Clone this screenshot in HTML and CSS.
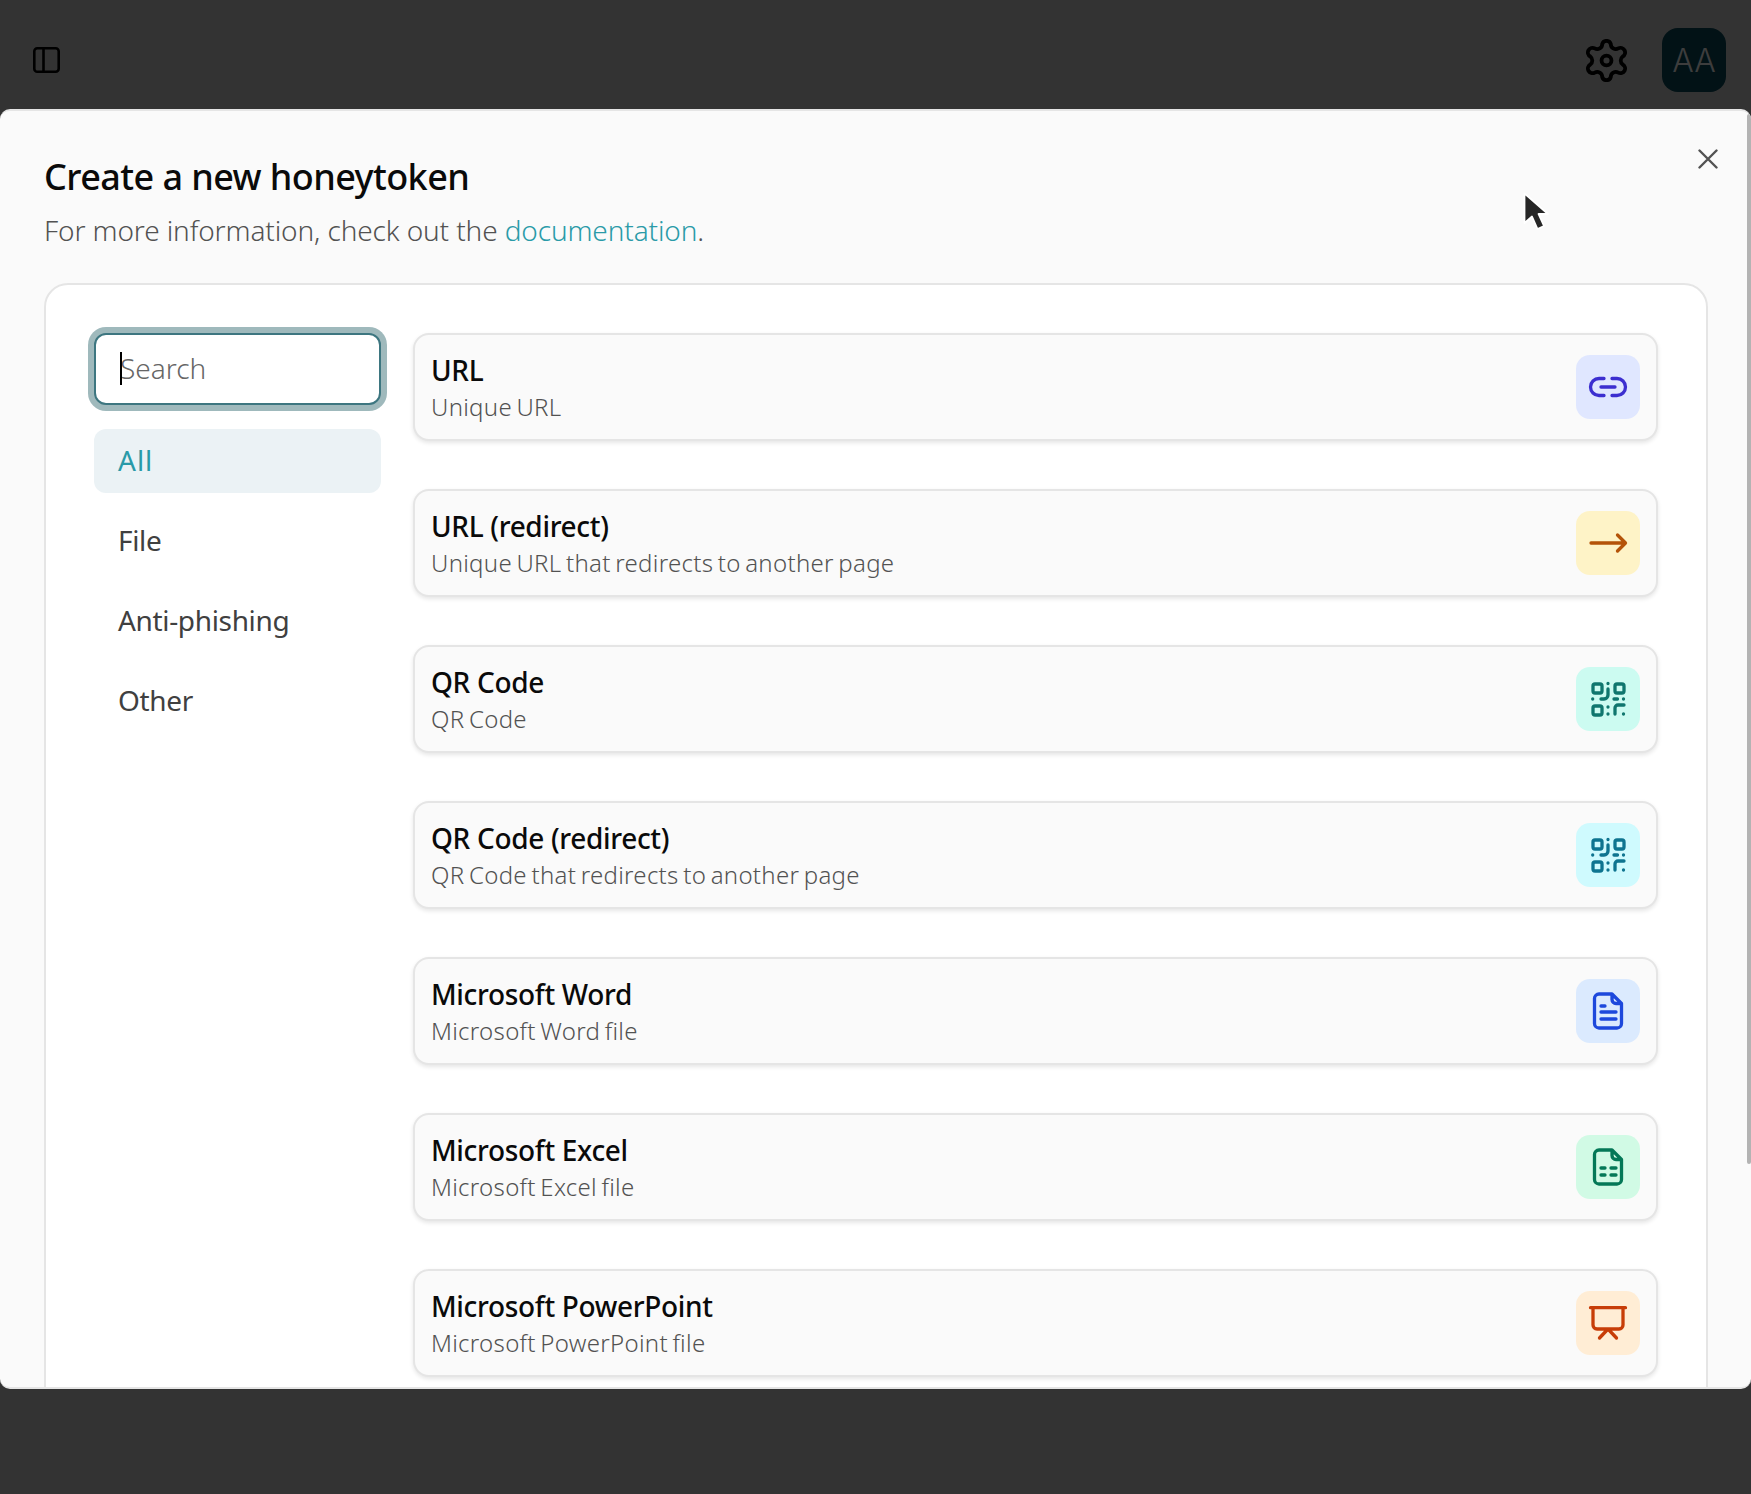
FILE: index.html
```html
<!DOCTYPE html>
<html lang="en">
<head>
<meta charset="UTF-8">
<title>Create a new honeytoken</title>
<meta name="viewport" content="width=device-width, initial-scale=1.0">
<link rel="stylesheet" href="styles.css">
</head>
<body>

<header class="topbar">
  <svg class="sidebar-icon" viewBox="0 0 27 26" fill="none" stroke="#000" stroke-width="2.6">
    <rect x="1.3" y="1.3" width="24.4" height="23.4" rx="3"/>
    <path d="M10.5 1.3V24.7"/>
  </svg>
  <div class="topbar-right">
    <svg class="gear-icon" viewBox="-13 -13 26 26" fill="none" stroke="#000" stroke-width="2.3" stroke-linejoin="round">
      <path d="M-2.6 -9.9A2.7 2.7 0 0 1 2.6 -9.9A3 3 0 0 0 7.1 -7.3A2.7 2.7 0 0 1 9.8 -2.4A3 3 0 0 0 9.8 2.4A2.7 2.7 0 0 1 7.1 7.3A3 3 0 0 0 2.6 9.9A2.7 2.7 0 0 1 -2.6 9.9A3 3 0 0 0 -7.1 7.3A2.7 2.7 0 0 1 -9.8 2.4A3 3 0 0 0 -9.8 -2.4A2.7 2.7 0 0 1 -7.1 -7.3A3 3 0 0 0 -2.6 -9.9Z"/>
      <circle cx="0" cy="0" r="3"/>
    </svg>
    <div class="avatar">AA</div>
  </div>
</header>

<section class="modal">
  <svg class="close-icon" viewBox="0 0 20 20" fill="none" stroke="#525252" stroke-width="2.4" stroke-linecap="round">
    <path d="M1.5 1.5L18.5 18.5M18.5 1.5L1.5 18.5"/>
  </svg>
  <div class="scroll-thumb"></div>

  <h1 class="modal-title">Create a new honeytoken</h1>
  <p class="modal-sub">For more information, check out the <a class="doc-link">documentation</a>.</p>

  <div class="panel">
    <aside class="filters">
      <div class="search-box"><span class="caret"></span>Search</div>
      <div class="filter filter-active">All</div>
      <div class="filter">File</div>
      <div class="filter">Anti-phishing</div>
      <div class="filter">Other</div>
    </aside>

    <div class="token-list">
      <div class="token">
        <div class="token-text">
          <div class="token-name">URL</div>
          <div class="token-desc">Unique URL</div>
        </div>
        <div class="tile tile-indigo">
          <svg class="tile-icon" viewBox="0 0 40 40"><path d="M16 11.500H11a8.500 8.500 0 0 0 0 17H16M24 11.500H29a8.500 8.500 0 0 1 0 17H24M13 20H27"/></svg>
        </div>
      </div>

      <div class="token">
        <div class="token-text">
          <div class="token-name">URL (redirect)</div>
          <div class="token-desc">Unique URL that redirects to another page</div>
        </div>
        <div class="tile tile-amber">
          <svg class="tile-icon" viewBox="0 0 40 40"><path d="M3 20H37M29.500 12L37.500 20L29.500 28"/></svg>
        </div>
      </div>

      <div class="token">
        <div class="token-text">
          <div class="token-name">QR Code</div>
          <div class="token-desc">QR Code</div>
        </div>
        <div class="tile tile-teal">
          <svg class="tile-icon" viewBox="0 0 40 40"><rect x="5" y="5" width="9" height="9" rx="2"/><rect x="27" y="5" width="9" height="9" rx="2"/><rect x="5" y="27" width="9" height="9" rx="2"/><path d="M20 4.500V4.600M20 10V16a4 4 0 0 1-4 4H13M4.700 20V20.100M26 20H29.500M35.500 20V20.100M20 28V28.100M20 35V35.100M27 35V29a3 3 0 0 1 3-3H36M35.500 35V35.100"/></svg>
        </div>
      </div>

      <div class="token">
        <div class="token-text">
          <div class="token-name">QR Code (redirect)</div>
          <div class="token-desc">QR Code that redirects to another page</div>
        </div>
        <div class="tile tile-cyan">
          <svg class="tile-icon" viewBox="0 0 40 40"><rect x="5" y="5" width="9" height="9" rx="2"/><rect x="27" y="5" width="9" height="9" rx="2"/><rect x="5" y="27" width="9" height="9" rx="2"/><path d="M20 4.500V4.600M20 10V16a4 4 0 0 1-4 4H13M4.700 20V20.100M26 20H29.500M35.500 20V20.100M20 28V28.100M20 35V35.100M27 35V29a3 3 0 0 1 3-3H36M35.500 35V35.100"/></svg>
        </div>
      </div>

      <div class="token">
        <div class="token-text">
          <div class="token-name">Microsoft Word</div>
          <div class="token-desc">Microsoft Word file</div>
        </div>
        <div class="tile tile-blue">
          <svg class="tile-icon" viewBox="0 0 40 40"><path d="M24 3H11a4.500 4.500 0 0 0-4.500 4.500V32.500A4.500 4.500 0 0 0 11 37H29a4.500 4.500 0 0 0 4.500-4.500V12.500ZM24 3V8.500a4 4 0 0 0 4 4H33.500M13 15H17M13 21H28M13 28H28"/></svg>
        </div>
      </div>

      <div class="token">
        <div class="token-text">
          <div class="token-name">Microsoft Excel</div>
          <div class="token-desc">Microsoft Excel file</div>
        </div>
        <div class="tile tile-green">
          <svg class="tile-icon" viewBox="0 0 40 40"><path d="M24 3H11a4.500 4.500 0 0 0-4.500 4.500V32.500A4.500 4.500 0 0 0 11 37H29a4.500 4.500 0 0 0 4.500-4.500V12.500ZM24 3V8.500a4 4 0 0 0 4 4H33.500M13 21H17M23 21H28M13 28H17M23 28H28"/></svg>
        </div>
      </div>

      <div class="token">
        <div class="token-text">
          <div class="token-name">Microsoft PowerPoint</div>
          <div class="token-desc">Microsoft PowerPoint file</div>
        </div>
        <div class="tile tile-orange">
          <svg class="tile-icon" viewBox="0 0 40 40"><path d="M2.500 4.700H37.500M5 4.700V22a4 4 0 0 0 4 4H31a4 4 0 0 0 4-4V4.700M20 26L11.500 35M20 26L28.500 35"/></svg>
        </div>
      </div>
    </div>
  </div>
</section>

<svg class="pointer" viewBox="0 0 26 40">
  <path d="M1.500 1.500V31L9 24.500L14.500 37L21 34L15.500 22H25Z" fill="#262626" stroke="#fff" stroke-width="1.800" stroke-linejoin="round"/>
</svg>

</body>
</html>
```

FILE: styles.css
```css
* {
  box-sizing: border-box;
}

html, body {
  margin: 0;
  height: 100%;
  overflow: hidden;
}

body {
  background-color: #333333;
  font-family: "Noto Sans", Arial, sans-serif;
  color: #0a0a0a;
}

/* top bar, dimmed by the modal backdrop */
.topbar {
  height: 109px;
  display: flex;
  align-items: center;
  justify-content: space-between;
  padding: 19px 25px 8px 33px;
}

.sidebar-icon {
  width: 27px;
  height: 26px;
}

.topbar-right {
  display: flex;
  align-items: center;
  gap: 34px;
}

.gear-icon {
  width: 43px;
  height: 43px;
}

.avatar {
  width: 64px;
  height: 64px;
  border-radius: 16px;
  background-color: #021216;
  color: #3d3d3d;
  display: flex;
  align-items: center;
  justify-content: center;
  font-size: 32px;
  font-family: "Inter", sans-serif;
  font-weight: 300;
}

.modal {
  position: relative;
  height: 1280px;
  background-color: #fafafa;
  border-top: 2px solid #e5e5e5;
  border-bottom: 2px solid #e5e5e5;
  border-radius: 10px;
  overflow: hidden;
  padding: 42px 43px 0 44px;
}

.close-icon {
  position: absolute;
  top: 38px;
  right: 33px;
  width: 20px;
  height: 20px;
}

.scroll-thumb {
  position: absolute;
  top: 3px;
  right: 0;
  width: 4px;
  height: 1050px;
  background-color: #b3b3b3;
  border-radius: 2px;
}

.modal-title {
  margin: 0;
  font-size: 36px;
  line-height: 48px;
  font-weight: 500;
  letter-spacing: -0.58px;
}

.modal-sub {
  margin: 9px 0 0;
  font-size: 28px;
  line-height: 40px;
  font-weight: 300;
  letter-spacing: -0.12px;
  color: #525252;
}

.doc-link {
  color: #2a9aa8;
}

.panel {
  margin-top: 33px;
  background-color: #fff;
  border: 2px solid #e5e5e5;
  border-radius: 24px;
  padding: 48px;
  display: flex;
  gap: 32px;
  min-height: 1200px;
}

.filters {
  width: 287px;
  flex-shrink: 0;
  display: flex;
  flex-direction: column;
  gap: 16px;
}

.search-box {
  position: relative;
  height: 72px;
  margin-bottom: 8px;
  background-color: #fff;
  border: 2px solid #3d7680;
  border-radius: 12px;
  box-shadow: 0 0 0 6px #9fb9bc;
  padding: 0 0 2px 24px;
  display: flex;
  align-items: center;
  font-size: 28px;
  font-weight: 300;
  color: #666666;
}

.caret {
  position: absolute;
  left: 24px;
  top: 17px;
  width: 2px;
  height: 33px;
  background-color: #000;
}

.filter {
  height: 64px;
  padding: 0 0 2px 24px;
  border-radius: 12px;
  display: flex;
  align-items: center;
  font-size: 28px;
  letter-spacing: -0.34px;
  color: #404040;
}

.filter-active {
  background-color: #ebf2f5;
  color: #2a9aa8;
  letter-spacing: 1px;
}

.token-list {
  flex: 1;
  display: flex;
  flex-direction: column;
  gap: 48px;
}

.token {
  height: 108px;
  background-color: #fafafa;
  border: 2px solid #e5e5e5;
  border-radius: 16px;
  box-shadow: 0 2px 4px rgba(0, 0, 0, 0.1);
  padding: 0 16px;
  display: flex;
  align-items: center;
  justify-content: space-between;
}

.token-text {
  padding-top: 3px;
}

.token-name {
  font-size: 28px;
  line-height: 36px;
  font-weight: 500;
  letter-spacing: -0.33px;
}

.token-desc {
  margin-top: 1px;
  font-size: 24px;
  line-height: 36px;
  font-weight: 300;
  letter-spacing: 0.3px;
  word-spacing: -2px;
  color: #525252;
}

.tile {
  width: 64px;
  height: 64px;
  border-radius: 14px;
  display: flex;
  align-items: center;
  justify-content: center;
}

.tile-icon {
  width: 40px;
  height: 40px;
  fill: none;
  stroke: currentColor;
  stroke-width: 3.300;
  stroke-linecap: round;
  stroke-linejoin: round;
}

.tile-indigo { background-color: #e0e7ff; color: #3c2fd0; }
.tile-amber { background-color: #fef3c7; color: #b45309; }
.tile-teal { background-color: #ccfbf1; color: #0f766e; }
.tile-cyan { background-color: #cffafe; color: #0e7490; }
.tile-blue { background-color: #dbeafe; color: #1d48dc; }
.tile-green { background-color: #d1fae5; color: #047857; }
.tile-orange { background-color: #ffedd5; color: #c73d08; }

/* mouse cursor caught in the screenshot */
.pointer {
  position: absolute;
  left: 1523px;
  top: 192px;
  width: 26px;
  height: 40px;
}
```
